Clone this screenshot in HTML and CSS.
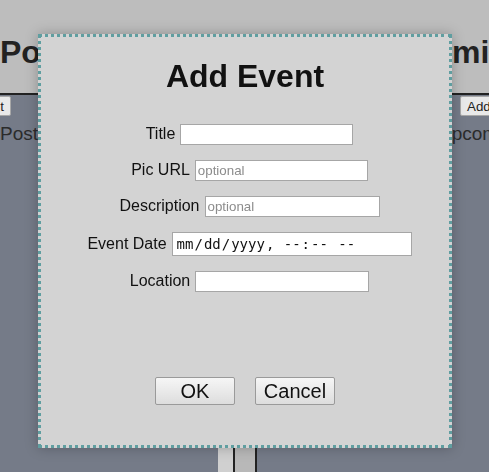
FILE: index.html
```html
<!DOCTYPE html>
<html lang="en">
<head>
<meta charset="utf-8">
<title>Add Event</title>
<link rel="stylesheet" href="styles.css">
</head>
<body>
<div class="page">
  <header class="top">
    <h1 class="brand">Posts</h1>
    <h1 class="brand brand-right">Admin</h1>
  </header>
  <main class="board">
    <section class="col col-left">
      <button class="mini mini-left" type="button">Edit</button>
      <p class="col-title">Posts</p>
    </section>
    <div class="rail rail-light"></div>
    <div class="rail rail-mid"></div>
    <section class="col col-right">
      <button class="mini mini-right" type="button">Add</button>
      <p class="col-title col-title-right">Upcoming</p>
    </section>
  </main>
</div>

<div class="modal">
  <h1 class="modal-title">Add Event</h1>
  <form class="event-form">
    <div class="field">
      <label for="title">Title</label>
      <input id="title" class="text-input" type="text">
    </div>
    <div class="field">
      <label for="pic">Pic URL</label>
      <input id="pic" class="text-input" type="text" placeholder="optional">
    </div>
    <div class="field">
      <label for="desc">Description</label>
      <input id="desc" class="text-input text-input-wide" type="text" placeholder="optional">
    </div>
    <div class="field">
      <label for="date">Event Date</label>
      <input id="date" class="date-input" type="datetime-local">
    </div>
    <div class="field">
      <label for="loc">Location</label>
      <input id="loc" class="text-input text-input-mid" type="text">
    </div>
  </form>
  <div class="actions">
    <button class="action-btn" type="button">OK</button>
    <button class="action-btn" type="button">Cancel</button>
  </div>
</div>
</body>
</html>
```

FILE: styles.css
```css
html, body {
  margin: 0;
  padding: 0;
  height: 100%;
  overflow: hidden;
}

body {
  font-family: "Liberation Sans", Arial, sans-serif;
  background: #757b88;
  color: #222;
}

.page {
  display: flex;
  flex-direction: column;
  height: 100vh;
}

.top {
  height: 93px;
  background: #bdbdbd;
  border-bottom: 2px solid #222;
  display: flex;
  justify-content: space-between;
  align-items: flex-start;
  overflow: hidden;
}

.brand {
  margin: 34px 0 0;
  font-size: 32px;
  font-weight: bold;
  color: #222;
  line-height: 37px;
}

.brand-right {
  margin-right: -20px;
}

.board {
  flex: 1;
  display: flex;
  background: #757b88;
}

.col {
  display: flex;
  flex-direction: column;
  align-items: flex-start;
}

.col-left {
  width: 218px;
}

.col-right {
  flex: 1;
  padding-left: 181px;
  overflow: hidden;
}

.mini {
  margin-top: 1px;
  height: 20px;
  padding: 0 6px;
  font-family: "Liberation Sans", Arial, sans-serif;
  font-size: 13.33px;
  color: #222;
  background: #e9e9e9;
  border: 1px solid #a8a8a8;
  border-radius: 2px;
}

.mini-left {
  margin-left: -26px;
}

.mini-right {
  margin-left: 22px;
}

.col-title {
  margin: 7px 0 0;
  font-size: 19px;
  line-height: 22px;
  color: #2b2b2b;
  white-space: nowrap;
}

.rail {
  width: 15px;
}

.rail-light {
  background: #d0d0d0;
  border-right: 2px solid #222;
}

.rail-mid {
  width: 20px;
  background: #b8b8b8;
  border-right: 2px solid #222;
}

/* Modal */
.modal {
  position: fixed;
  left: 38px;
  top: 34px;
  width: 408px;
  height: 408px;
  background: #d3d3d3;
  border: 3px dotted #5f9ea0;
  box-shadow: 0 0 12px rgba(0, 0, 0, 0.25);
  display: flex;
  flex-direction: column;
  align-items: center;
}

.modal-title {
  margin: 21px 0 29px;
  font-size: 32px;
  line-height: 37px;
  font-weight: bold;
  color: #111;
}

.event-form {
  display: flex;
  flex-direction: column;
  align-items: center;
  gap: 15px;
  padding-left: 9px;
}

.field {
  display: flex;
  align-items: baseline;
  gap: 5px;
  font-size: 16px;
  color: #111;
}

.text-input {
  box-sizing: border-box;
  width: 173px;
  height: 21px;
  padding: 1px 2px;
  border: 1px solid #a6a6a6;
  background: #fff;
  font-family: "Liberation Sans", Arial, sans-serif;
  font-size: 13.33px;
  color: #111;
  outline: none;
}

.text-input-wide {
  width: 175px;
}

.text-input-mid {
  width: 174px;
}

.text-input::placeholder {
  color: #8c8c8c;
}

.date-input {
  box-sizing: border-box;
  width: 240px;
  height: 24px;
  padding: 1px 3px;
  border: 1px solid #a6a6a6;
  background: #fff;
  font-family: "DejaVu Sans Mono", "Liberation Mono", monospace;
  font-size: 14px;
  color: #111;
}

.date-input::-webkit-calendar-picker-indicator {
  display: none;
}

.actions {
  margin-top: 85px;
  display: flex;
  gap: 20px;
}

.action-btn {
  width: 80px;
  height: 28px;
  padding: 0;
  font-family: "Liberation Sans", Arial, sans-serif;
  font-size: 20px;
  color: #111;
  background: linear-gradient(#f6f6f6, #dddddd);
  border: 1px solid #9a9a9a;
  border-radius: 2px;
}
```
